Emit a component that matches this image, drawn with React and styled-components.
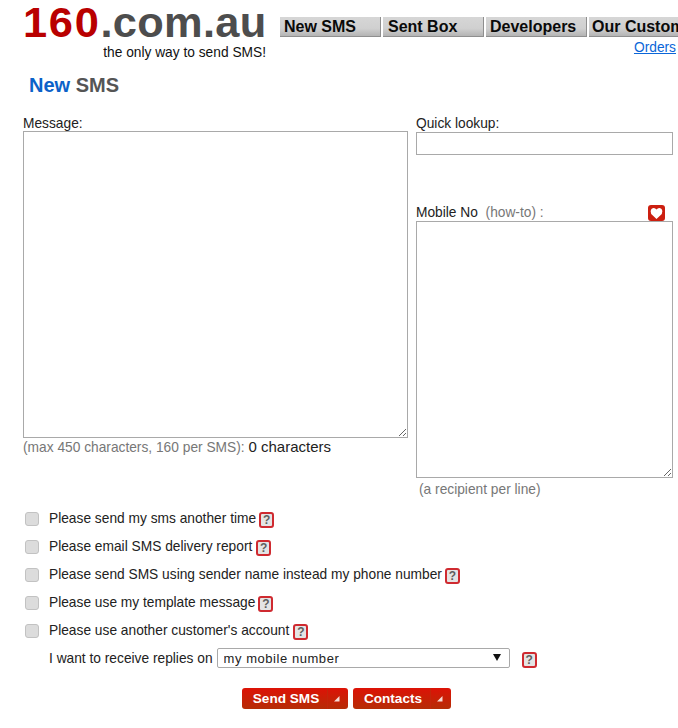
import React from "react";
import styled, { createGlobalStyle } from "styled-components";

const Global = createGlobalStyle`
  html, body { margin: 0; padding: 0; background: #fff; overflow: hidden; }
  body { font-family: "Liberation Sans", Arial, sans-serif; font-size: 13.75px; color: #222; }
`;

const Page = styled.div`
  width: 678px;
  height: 728px;
  overflow: hidden;
`;

const Header = styled.header`
  display: flex;
  height: 68px;
  padding-left: 23px;
`;

const Brand = styled.div`
  width: 243px;
  flex: none;
  text-align: right;
`;

const Logo = styled.div`
  font-size: 43.4px;
  font-weight: bold;
  line-height: 44px;
  letter-spacing: 0.3px;
  white-space: nowrap;
  text-align: left;
  color: #4d4d4d;
  span { color: #b90000; letter-spacing: 1.7px; }
`;

const Tagline = styled.div`
  font-size: 13.75px;
  line-height: 16px;
  margin-top: 1px;
  color: #111;
  white-space: nowrap;
`;

const NavColumn = styled.div`
  margin-left: 14px;
  width: 398px;
  padding-top: 17px;
`;

const Nav = styled.nav`
  display: flex;
  gap: 2px;
  width: 398px;
  overflow: hidden;
`;

const Tab = styled.a`
  flex: none;
  box-sizing: border-box;
  width: ${(p) => p.$width || 101}px;
  height: 20px;
  padding-left: ${(p) => p.$pad || 4}px;
  font-size: 16px;
  font-weight: bold;
  line-height: 19px;
  color: #0a0a0a;
  white-space: nowrap;
  overflow: hidden;
  background: linear-gradient(#d6d6d6, #d0d0d0 60%, #b4b4b4);
  border-right: 1px solid #8f8f8f;
  border-bottom: 1px solid #8f8f8f;
`;

const Orders = styled.a`
  display: block;
  margin-top: 3px;
  padding-right: 2px;
  text-align: right;
  font-size: 13.75px;
  line-height: 16px;
  color: #0b66d8;
  text-decoration: underline;
`;

const Title = styled.h1`
  margin: 0;
  padding: 5px 0 0 29px;
  height: 40px;
  box-sizing: border-box;
  font-size: 20px;
  line-height: 24px;
  font-weight: bold;
  color: #555;
  span { color: #0b62c9; }
`;

const Columns = styled.div`
  display: grid;
  grid-template-columns: 385px 257px;
  column-gap: 8px;
  padding-left: 23px;
  height: 397px;
`;

const Column = styled.div`
  display: flex;
  flex-direction: column;
`;

const Label = styled.label`
  display: flex;
  justify-content: space-between;
  align-items: flex-end;
  height: ${(p) => p.$height || 15}px;
  line-height: 15px;
  color: #222;
  white-space: nowrap;
`;

const LabelText = styled.span`
  padding-bottom: 1px;
`;

const Muted = styled.span`
  color: #777;
`;

const Area = styled.textarea`
  display: block;
  box-sizing: border-box;
  width: 100%;
  height: ${(p) => p.$height}px;
  margin: 0;
  border: 1px solid #a9a9a9;
  outline: none;
  resize: both;
  background: #fff;
`;

const Lookup = styled.input`
  display: block;
  box-sizing: border-box;
  width: 100%;
  height: 23px;
  margin: 1px 0 0;
  border: 1px solid #a9a9a9;
  background: #fff;
`;

const Note = styled.div`
  margin: ${(p) => p.$top}px 0 0;
  padding-left: ${(p) => p.$indent || 0}px;
  line-height: 16px;
  color: #777;
  white-space: nowrap;
  b { font-weight: normal; font-size: 15px; color: #222; }
`;

const HeartBox = styled.svg`
  display: block;
  flex: none;
  width: 17px;
  height: 16px;
  margin-right: 8px;
`;

const Options = styled.div`
  padding-left: 25px;
`;

const Option = styled.div`
  display: flex;
  align-items: center;
  height: 28px;
`;

const Check = styled.span`
  flex: none;
  box-sizing: border-box;
  width: 14px;
  height: 14px;
  margin-right: 10px;
  border: 1px solid #c2c2c2;
  border-radius: 3px;
  background: #dcdcdc;
`;

const CheckSpacer = styled.span`
  flex: none;
  width: 24px;
`;

const OptionText = styled.span`
  white-space: nowrap;
  line-height: 16px;
  color: #222;
`;

const Help = styled.span`
  flex: none;
  box-sizing: border-box;
  width: 15px;
  height: 16px;
  margin-left: ${(p) => p.$gap || 3}px;
  margin-top: 1px;
  border: 2px solid #cf2a30;
  border-radius: 3px;
  background: #e4e4e4;
  color: #5f5f5f;
  font-size: 12px;
  font-weight: bold;
  line-height: 12px;
  text-align: center;
`;

const SelectWrap = styled.div`
  position: relative;
  flex: none;
  width: 293px;
  height: 20px;
  margin: -2px 0 0 4px;
`;

const Select = styled.select`
  display: block;
  appearance: none;
  box-sizing: border-box;
  width: 100%;
  height: 20px;
  padding: 0 0 0 6px;
  border: 1px solid #a9a9a9;
  border-radius: 2px;
  background: #fff;
  font-family: "Liberation Sans", Arial, sans-serif;
  font-size: 13px;
  letter-spacing: 0.55px;
  color: #222;
`;

const Caret = styled.svg`
  position: absolute;
  top: 6px;
  right: 9px;
  width: 8px;
  height: 7px;
`;

const Actions = styled.div`
  display: flex;
  gap: 5px;
  padding: 15px 0 0 242px;
`;

const Button = styled.button`
  display: flex;
  align-items: center;
  box-sizing: border-box;
  width: ${(p) => p.$width}px;
  height: 21px;
  margin: 0;
  padding: 0;
  border: 0;
  border-radius: 3px;
  background: linear-gradient(#dd1206, #b52d06);
  color: #fff;
  font-family: "Liberation Sans", Arial, sans-serif;
  font-size: 13.6px;
  font-weight: bold;
`;

const ButtonLabel = styled.span`
  flex: 1;
  padding-left: 3px;
  text-align: center;
  line-height: 21px;
`;

const ButtonArrow = styled.span`
  flex: none;
  display: flex;
  align-items: center;
  justify-content: center;
  width: 21px;
  height: 21px;
  padding-right: 2px;
  border-left: 1px solid #c4250a;
  box-sizing: border-box;
`;

const Heart = () => (
  <HeartBox viewBox="0 0 17 16">
    <rect width="17" height="16" rx="3" fill="#cc1f10" />
    <path d="M8.5 14 L3.2 9 Q1.6 6.4 3.4 4 Q6.4 1.8 8.5 4.6 Q10.6 1.8 13.6 4 Q15.4 6.4 13.8 9 Z" fill="#fff" />
  </HeartBox>
);

const Arrow = () => (
  <svg width="6" height="6" viewBox="0 0 6 6">
    <path d="M0 5.5 L5.5 5.5 L5.5 0 Z" fill="#f6dcd6" />
  </svg>
);

const options = [
  ["Please send my sms another time", 3],
  ["Please email SMS delivery report", 4],
  ["Please send SMS using sender name instead my phone number", 3],
  ["Please use my template message", 3],
  ["Please use another customer's account", 4],
];

export default function App() {
  return (
    <Page>
      <Global />
      <Header>
        <Brand>
          <Logo><span>160</span>.com.au</Logo>
          <Tagline>the only way to send SMS!</Tagline>
        </Brand>
        <NavColumn>
          <Nav>
            <Tab>New SMS</Tab>
            <Tab $pad={5}>Sent Box</Tab>
            <Tab>Developers</Tab>
            <Tab $width={120} $pad={3}>Our Customers</Tab>
          </Nav>
          <Orders href="#">Orders</Orders>
        </NavColumn>
      </Header>
      <Title><span>New</span> SMS</Title>
      <Columns>
        <Column>
          <Label $height={23}>Message:</Label>
          <Area $height={307} />
          <Note $top={1}>(max 450 characters, 160 per SMS): <b>0 characters</b></Note>
        </Column>
        <Column>
          <Label $height={23}>Quick lookup:</Label>
          <Lookup />
          <Label $height={50} />
          <Label $height={16}>
            <LabelText>Mobile No&nbsp; <Muted>(how-to) :</Muted></LabelText>
            <Heart />
          </Label>
          <Area $height={257} />
          <Note $top={4} $indent={3}>(a recipient per line)</Note>
        </Column>
      </Columns>
      <Options>
        {options.map(([text, gap]) => (
          <Option key={text}>
            <Check />
            <OptionText>{text}</OptionText>
            <Help $gap={gap}>?</Help>
          </Option>
        ))}
        <Option>
          <CheckSpacer />
          <OptionText>I want to receive replies on</OptionText>
          <SelectWrap>
            <Select defaultValue="mobile">
              <option value="mobile">my mobile number</option>
            </Select>
            <Caret viewBox="0 0 8 7"><path d="M0 0 H8 L4 7 Z" fill="#111" /></Caret>
          </SelectWrap>
          <Help $gap={12}>?</Help>
        </Option>
      </Options>
      <Actions>
        <Button $width={106}><ButtonLabel>Send SMS</ButtonLabel><ButtonArrow><Arrow /></ButtonArrow></Button>
        <Button $width={98}><ButtonLabel>Contacts</ButtonLabel><ButtonArrow><Arrow /></ButtonArrow></Button>
      </Actions>
    </Page>
  );
}
